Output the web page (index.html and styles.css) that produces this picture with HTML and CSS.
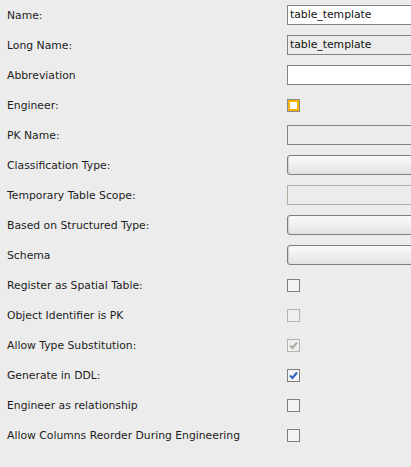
FILE: index.html
```html
<!DOCTYPE html>
<html>
<head>
    <meta charset="UTF-8">
    <title>Table Properties</title>
    <link rel="stylesheet" href="styles.css">
</head>
<body>
    <div id="props">
        <label class="prop-label">Name:</label>
        <div class="prop-field"><div class="text-field">table_template</div></div>

        <label class="prop-label">Long Name:</label>
        <div class="prop-field"><div class="text-field readonly">table_template</div></div>

        <label class="prop-label">Abbreviation</label>
        <div class="prop-field"><div class="text-field"></div></div>

        <label class="prop-label">Engineer:</label>
        <div class="prop-field"><span class="check focused"></span></div>

        <label class="prop-label">PK Name:</label>
        <div class="prop-field"><div class="text-field readonly"></div></div>

        <label class="prop-label">Classification Type:</label>
        <div class="prop-field"><div class="combo"></div></div>

        <label class="prop-label">Temporary Table Scope:</label>
        <div class="prop-field"><div class="text-field disabled"></div></div>

        <label class="prop-label">Based on Structured Type:</label>
        <div class="prop-field"><div class="combo"></div></div>

        <label class="prop-label">Schema</label>
        <div class="prop-field"><div class="combo"></div></div>

        <label class="prop-label">Register as Spatial Table:</label>
        <div class="prop-field"><span class="check"></span></div>

        <label class="prop-label">Object Identifier is PK</label>
        <div class="prop-field"><span class="check disabled"></span></div>

        <label class="prop-label">Allow Type Substitution:</label>
        <div class="prop-field">
            <span class="check disabled">
                <svg viewBox="0 0 11 11" width="11" height="11"><path d="M2 5.5 L4.5 8 L9 2.5" fill="none" stroke="#a9a99e" stroke-width="2"/></svg>
            </span>
        </div>

        <label class="prop-label">Generate in DDL:</label>
        <div class="prop-field">
            <span class="check">
                <svg viewBox="0 0 11 11" width="11" height="11"><path d="M2 5.5 L4.5 8 L9 2.5" fill="none" stroke="#2d63cc" stroke-width="2"/></svg>
            </span>
        </div>

        <label class="prop-label">Engineer as relationship</label>
        <div class="prop-field"><span class="check"></span></div>

        <label class="prop-label">Allow Columns Reorder During Engineering</label>
        <div class="prop-field"><span class="check"></span></div>
    </div>
</body>
</html>
```

FILE: styles.css
```css
body, html {
    margin: 0;
    padding: 0;
    width: 100%;
    height: 100%;
    overflow: hidden;
    background-color: #ececec;
    color: #1c1c1c;
    font-family: "DejaVu Sans", Verdana, sans-serif;
    font-size: 10.8px;
}
#props {
    display: grid;
    grid-template-columns: 287px 1fr;
    grid-auto-rows: 30px;
    align-items: center;
}
.prop-label {
    padding-left: 7px;
    white-space: nowrap;
}
.prop-field {
    display: flex;
    align-items: center;
    height: 100%;
    overflow: hidden;
}
.text-field {
    box-sizing: border-box;
    flex-shrink: 0;
    width: 160px;
    height: 20px;
    padding: 0 2px;
    border: 1px solid #838383;
    background-color: #fff;
    color: #111;
    line-height: 17px;
}
.text-field.readonly {
    background-color: #ececec;
}
.text-field.disabled {
    background-color: #ececec;
    border-color: #aeae9f;
}
.combo {
    box-sizing: border-box;
    flex-shrink: 0;
    width: 160px;
    height: 20px;
    border: 1px solid #7e7e7e;
    border-radius: 3px;
    background: linear-gradient(#fbfbfb, #efefef 50%, #e2e2e2);
    box-shadow: inset 1px 0 1px #d0d0d0;
}
.check {
    box-sizing: border-box;
    flex-shrink: 0;
    width: 13px;
    height: 13px;
    border: 1px solid #7f7f7f;
    background-color: #f3f3f3;
    display: flex;
    align-items: center;
    justify-content: center;
}
.check.disabled {
    border-color: #b4b4aa;
    background-color: #efefef;
}
.check.focused {
    border-color: #8a8a8a;
    background-color: #fff;
    box-shadow: inset 0 0 0 2px #f5b400;
}
```
